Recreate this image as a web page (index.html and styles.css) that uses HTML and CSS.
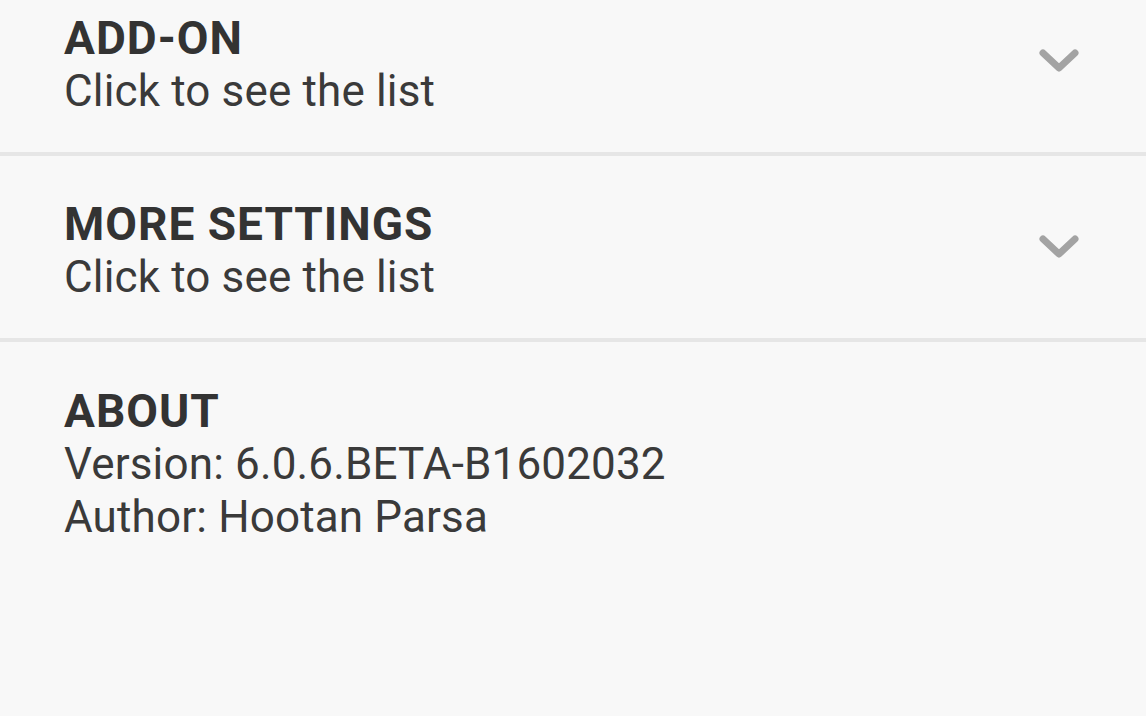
FILE: index.html
```html
<!DOCTYPE html>
<html>
<head>
<meta charset="utf-8">
<link rel="stylesheet" href="styles.css">
</head>
<body>
<div class="list">
  <div class="item">
    <div class="text">
      <div class="title">ADD-ON</div>
      <div class="sub">Click to see the list</div>
    </div>
    <svg class="chev" width="44" height="30" viewBox="0 0 44 30"><polyline points="6,6 22,21 38,6" fill="none" stroke="#a3a3a3" stroke-width="7" stroke-linecap="round" stroke-linejoin="round"/></svg>
  </div>
  <div class="item">
    <div class="text">
      <div class="title">MORE SETTINGS</div>
      <div class="sub">Click to see the list</div>
    </div>
    <svg class="chev" width="44" height="30" viewBox="0 0 44 30"><polyline points="6,6 22,21 38,6" fill="none" stroke="#a3a3a3" stroke-width="7" stroke-linecap="round" stroke-linejoin="round"/></svg>
  </div>
  <div class="item about">
    <div class="text">
      <div class="title">ABOUT</div>
      <div class="sub">Version: 6.0.6.BETA-B1602032</div>
      <div class="sub">Author: Hootan Parsa</div>
    </div>
  </div>
</div>
</body>
</html>
```

FILE: styles.css
```css
html, body {
  margin: 0;
  padding: 0;
  background: #f8f8f8;
  height: 100%;
  overflow: hidden;
}
body {
  font-family: Roboto, "Noto Sans", sans-serif;
  color: #333333;
}
.list {
  margin-top: -31px;
  display: flex;
  flex-direction: column;
}
.item {
  display: flex;
  align-items: center;
  justify-content: space-between;
  padding: 42px 64px 34px 64px;
  border-bottom: 4px solid #e6e6e6;
}
.item + .item {
  padding-top: 41px;
}
.item.about {
  border-bottom: none;
  padding-top: 42px;
}
.text {
  display: flex;
  flex-direction: column;
}
.title {
  font-size: 46px;
  font-weight: 700;
  line-height: 54px;
  letter-spacing: 1px;
  color: #333333;
}
.sub {
  font-size: 44px;
  font-weight: 400;
  line-height: 53px;
  letter-spacing: 0.15px;
  color: #3a3a3a;
}
.chev {
  display: block;
  margin-right: 1px;
  margin-bottom: 6px;
}
```
